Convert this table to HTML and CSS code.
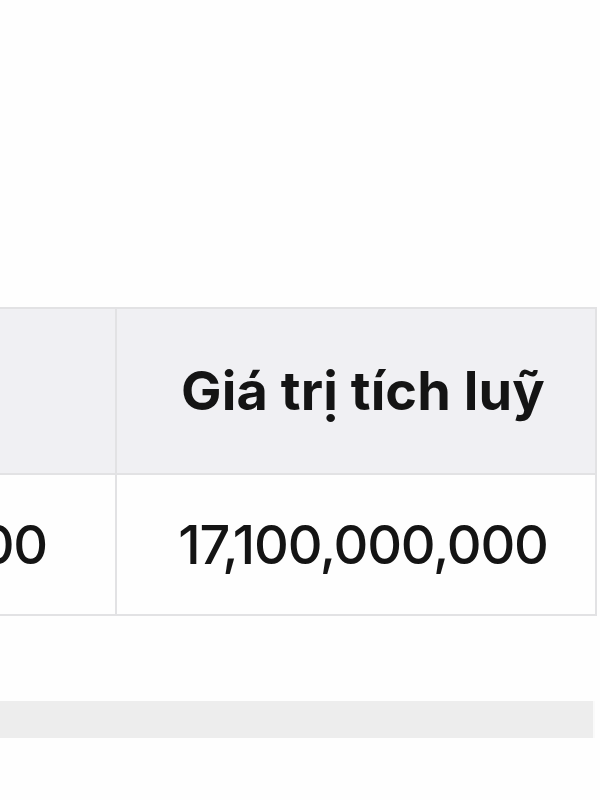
FILE: index.html
```html
<!DOCTYPE html>
<html lang="vi">
<head>
<meta charset="utf-8">
<link rel="stylesheet" href="styles.css">
</head>
<body>
<div class="page">
  <div class="table-wrap">
    <div class="table">
      <div class="cell head first"></div>
      <div class="cell head main">Giá trị tích luỹ</div>
      <div class="cell body first"><span>17,100,000,000</span></div>
      <div class="cell body main">17,100,000,000</div>
    </div>
  </div>
  <div class="bar"></div>
</div>
</body>
</html>
```
FILE: styles.css
```css
html, body {
  margin: 0;
  padding: 0;
  background: #fefefe;
}
.page {
  width: 600px;
  height: 800px;
  overflow: hidden;
  font-family: Inter, "Noto Sans", sans-serif;
  color: #141414;
}
.table-wrap {
  padding-top: 307px;
}
.table {
  display: grid;
  grid-template-columns: 117px 480px;
  grid-template-rows: 166px 141px;
  border-top: 2px solid #e2e2e4;
  box-sizing: border-box;
  width: 597px;
}
.cell {
  display: flex;
  align-items: center;
  overflow: hidden;
  border-bottom: 2px solid #e2e2e4;
  box-sizing: border-box;
  white-space: nowrap;
}
.cell.first {
  border-right: 2px solid #e2e2e4;
  justify-content: flex-end;
  padding-right: 68px;
}
.cell.main {
  border-right: 2px solid #e2e2e4;
  justify-content: center;
  padding-left: 14px;
}
.cell.head {
  background: #f0f0f3;
  font-weight: 700;
  font-size: 54px;
  letter-spacing: 0.1px;
  padding-bottom: 2px;
}
.cell.body {
  background: #fefefe;
  font-weight: 500;
  font-size: 54px;
  letter-spacing: -1.2px;
}
.cell.first span {
  flex-shrink: 0;
}
.bar {
  margin-top: 85px;
  width: 593px;
  height: 37px;
  background: #ededed;
  border-right: 2px solid #fafafa;
}
```
